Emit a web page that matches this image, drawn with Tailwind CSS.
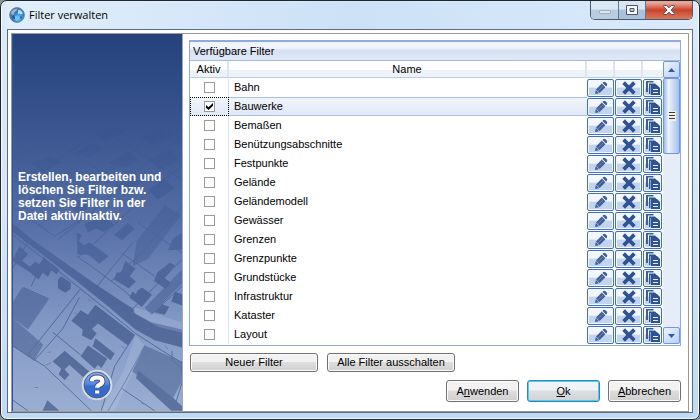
<!DOCTYPE html>
<html lang="de">
<head>
<meta charset="utf-8">
<meta name="viewport" content="width=device-width, initial-scale=1">
<title>Filter verwalten</title>
<script src="https://cdn.jsdelivr.net/npm/@tailwindcss/browser@4"></script>
</head>
<body class="bg-[#8a949c] font-['Liberation_Sans',Arial,sans-serif] text-[11px] leading-[13px] text-black">

<svg class="hidden" aria-hidden="true">
  <symbol id="pencil" viewBox="0 0 14 14">
    <path d="M1 13l.8-4L5 12.200z" fill="#3f5f96"/>
    <path d="M2 8.400L7.800 2.600l3.600 3.600L5.600 12z" fill="#3f5f96"/>
    <path d="M8.500 1.900l.8-.8q1.200-.8 2.200.1l1.300 1.300q.9 1.200 0 2.200l-.8.8z" fill="#3f5f96"/>
    <path d="M4.300 9.600l5.200-5.200" stroke="#7d9aca" stroke-width=".7"/>
  </symbol>
  <symbol id="cross" viewBox="0 0 14 14">
    <path d="M3 3l8 8M11 3l-8 8" stroke="#2f5291" stroke-width="3.800" stroke-linecap="square"/>
  </symbol>
  <symbol id="copy" viewBox="0 0 16 16">
    <path d="M1 1h7.500v1.500H3V12H1z" fill="#3c5f9c"/>
    <path d="M4 3.500h6L11.500 5H6v9H4z" fill="#2f5291"/>
    <path d="M6 5h6l3 3v7H6z" fill="#2f5291"/>
    <path d="M5.500 5v9.500" stroke="#b9cae8" stroke-width=".7"/>
    <path d="M8 9.500h5M8 12.500h5" stroke="#e4ecfa"/>
  </symbol>
</svg>

<main class="flex h-screen flex-col rounded-[7px] border border-[#20262c] bg-[#cfe1f5] bg-linear-to-b from-[#dcebfa] via-[#d3e6fa] to-[#bfdaf5] px-1.5 pb-1.5 shadow-[inset_0_0_0_1px_#f4faff]">
  <header class="flex h-7 shrink-0 items-start justify-between bg-linear-to-r from-[#e2effb]/80 via-[#c2dbf5]/60 to-[#d9eafb]/80">
    <div class="flex h-[27px] items-center gap-1 pl-0.5 font-['Open_Sans','Noto_Sans',sans-serif] text-[11px]">
      <svg class="size-4" viewBox="0 0 16 16" aria-hidden="true">
        <defs><radialGradient id="globe" cx=".6" cy=".7" r=".8"><stop offset="0" stop-color="#6bd0f5"/><stop offset=".5" stop-color="#3478c4"/><stop offset="1" stop-color="#6a7788"/></radialGradient></defs>
        <circle cx="8" cy="8" r="7.400" fill="url(#globe)" stroke="#58789c" stroke-width=".8"/>
        <path d="M2.500 4.500Q5 1.500 8.500 1.800L7 4 5 5.500 4.500 8 2 7z" fill="#b9c8d6" opacity=".8"/>
        <path d="M9 3l3 .5 2 3-2 1-1.500-1L9 7z" fill="#a8e4fb"/>
        <path d="M6 9l3 .5 1 2-2 3-2-2z" fill="#6cc3ee"/>
        <path d="M3 11l2-3 1 4M11 9l2 1-1 3z" fill="#224f96"/>
      </svg>
      <h1>Filter verwalten</h1>
    </div>
    <div class="flex h-[19px] overflow-hidden rounded-b-[5px] border border-t-0 border-[#4c5968]">
      <button aria-label="Minimieren" class="flex w-7 items-center justify-center border-r border-[#65778a] bg-linear-to-b from-[#dbe8f6] from-45% to-[#b9cde2] to-50%">
        <svg class="mt-1 h-1 w-3" viewBox="0 0 12 4"><rect x=".5" y=".5" width="11" height="3" rx=".5" fill="#dfe6ec" stroke="#a3afba"/></svg>
      </button>
      <button aria-label="Maximieren" class="flex w-[27px] items-center justify-center border-r border-[#65778a] bg-linear-to-b from-[#d8e5f3] from-45% to-[#a9c1da] to-50%">
        <svg class="h-2.5 w-3" viewBox="0 0 12 10"><path d="M.5.500h11v9H.5zM4 3.500v3h4v-3z" fill="#fff" fill-rule="evenodd" stroke="#4c5565"/></svg>
      </button>
      <button aria-label="Schließen" class="flex w-[46px] items-center justify-center bg-linear-to-b from-[#e6a598] from-10% via-[#c9402a] via-50% to-[#d97a5c]">
        <svg class="h-2.5 w-3" viewBox="0 0 12 10"><path d="M.7.500h3L6 2.800 8.300.500h3v1L8 5l3.300 3.500v1h-3L6 7.200 3.700 9.500h-3v-1L4 5 .7 1.500z" fill="#fff" stroke="#5a4550" stroke-width=".9"/></svg>
      </button>
    </div>
  </header>

  <div class="flex min-h-0 grow flex-col border border-[#5f6b78] bg-white pt-[3px] pr-[3px] pl-[3px]">
    <div class="flex min-h-0 grow border border-[#9a9a9a]">
      <aside class="relative flex w-[171px] shrink-0 flex-col border-r border-[#a9a5a0] bg-[#3a5590]">
        <svg class="absolute inset-0 size-full" viewBox="0 0 170 378" preserveAspectRatio="xMidYMid slice" aria-hidden="true">
          <defs>
            <linearGradient id="sky" x1="0" y1="0" x2="0" y2="1"><stop offset="0" stop-color="#25427c"/><stop offset=".25" stop-color="#3a5590"/><stop offset=".5" stop-color="#556ea5"/><stop offset=".75" stop-color="#8096c4"/><stop offset="1" stop-color="#9baed2"/></linearGradient>
            <linearGradient id="fade" x1="0" y1="0" x2="0" y2="1"><stop offset="0" stop-color="#fff" stop-opacity="0"/><stop offset=".2" stop-color="#fff" stop-opacity=".25"/><stop offset=".45" stop-color="#fff" stop-opacity=".7"/><stop offset=".6" stop-color="#fff"/></linearGradient>
            <linearGradient id="shade" gradientUnits="userSpaceOnUse" x1="0" y1="0" x2="0" y2="948"><stop offset="0" stop-color="#2c4985"/><stop offset=".3" stop-color="#3a5590"/><stop offset=".5" stop-color="#4a6298"/><stop offset="1" stop-color="#5d739f"/></linearGradient>
            <mask id="haze" maskUnits="userSpaceOnUse" x="0" y="0" width="540" height="948"><rect width="540" height="948" fill="url(#fade)"/></mask>
          </defs>
          <rect width="170" height="378" fill="url(#sky)"/>
          <g transform="translate(-4 66) scale(.33333)"><g mask="url(#haze)">
            <path fill="url(#shade)" d="M12 370L70 418 150 475 250 545 340 605 375 627 382 642 430 668 522 690V744L440 722 382 690 300 620 200 540 110 470 12 395z"/>
            <path fill="url(#shade)" d="M42 564L122 600 60 690 12 655V612zM12 655L60 695 106 735 78 784 12 738zM410 738L520 785V850L490 905 372 815zM374 500L386 425 470 318 520 345 420 478zM522 510L410 625 430 645 522 552z" opacity=".7"/>
            <g fill="url(#shade)">
              <path d="M218 632L240 646 262 616 380 706 360 738 270 672 252 688 266 702 250 722 222 708 224 690 190 664z"/>
              <path d="M262 716L320 762 308 782 254 740zM240 738L298 778 280 806 270 796 260 808 218 770z"/>
              <path d="M170 754L248 820 236 842 184 796 170 810 184 826 170 842 152 824 160 808 134 786zM118 902L154 934H104zM390 812L495 895 522 920V934H490L384 836z"/>
              <path d="M35 440L60 464 42 484 66 502 82 486 104 500 84 530 12 484zM108 474L154 510 146 524 130 512 120 532 104 520 92 540 72 524z"/>
              <path d="M150 540L160 530 188 550V568L172 580 150 566zM206 398L222 408 212 424 228 438 244 428 302 470 274 492 240 466 208 464z"/>
              <path d="M352 484L382 508 366 530 384 546 362 566 318 540 326 520 340 518zM388 574L402 564 432 586 402 622 364 594 374 576 384 584zM448 518L486 490 502 498 470 536 490 550 472 568 438 544zM500 576L522 584V618L490 606z"/>
              <path d="M230 372L292 350 318 376 288 398 264 386 240 400zM330 396L360 370 380 388 342 422 318 406zM462 614L484 622 470 646 440 638zM494 418L522 400V450L480 452z"/>
              <path d="M60 298L100 282 130 302 104 318zM200 160L250 130 282 148 246 174zM300 190L360 160 390 180 350 204zM420 180L490 150 512 182 460 210zM70 190L130 170 160 188 104 218zM318 260L370 230 400 248 350 286zM420 270L470 240 500 266 450 300zM180 320L226 296 250 318 214 344zM260 100L320 84 350 100 290 124zM400 110L460 90 500 106 430 136z"/>
            </g>
            <g fill="none" stroke="url(#shade)" stroke-width="3">
              <path d="M12 405L100 472 190 546 290 626 380 700 460 752 522 790M216 570L58 768M134 698L218 766M12 738L110 800 250 934M78 784L164 688 214 594M380 706L320 800 280 934M410 738L350 850 300 934M340 866L440 934M492 755V780L522 810M520 785L522 850 500 920M12 900L60 934M46 564L122 598"/>
              <path d="M375 627L522 480M430 645L522 560M310 545L410 450 522 322M260 570L316 500 374 430M150 420L250 340 380 220 522 110M210 474L300 394 440 262 522 200M12 510L58 430M70 560L110 470M205 470L250 500 350 575 400 620M340 460L440 530M390 370L522 460M12 320L140 410 220 360M12 250L130 190 260 110M90 380L210 290 340 180 470 80M12 180L110 130M60 220L180 310M180 150L360 270M300 100L522 240"/>
            </g>
            <g fill="#cad6ee" opacity=".2"><path d="M382 625L522 668V700L450 682 375 640zM382 706L410 738 320 934H280L348 812z"/></g>
            <path fill="none" stroke="#6c83ad" stroke-width="3" d="M150 614q5 2 2 7M240 600q10 0 8 8M118 758q12 2 12-3M36 670q8 0 8 8M200 640q8 2 8 8M340 740l12 8M130 790l-16 6M420 775q12-6 16 2M470 740l10 8M80 864h10M60 724q12 0 9 8M400 910l8 4"/>
          </g></g>
          <rect width="1" height="378" fill="#2456ab"/>
        </svg>
        <p class="relative my-auto pr-0 pb-[52px] pl-1.5 text-[12px] leading-[13px] font-bold text-white">Erstellen, bearbeiten und<br>löschen Sie Filter bzw.<br>setzen Sie Filter in der<br>Datei aktiv/inaktiv.</p>
        <button aria-label="Hilfe" class="absolute bottom-2.5 left-1/2 size-8 -translate-x-1/2">
          <svg viewBox="0 0 32 32" aria-hidden="true">
            <defs><linearGradient id="ball" x1="0" y1="0" x2="0" y2="1"><stop offset="0" stop-color="#88aff0"/><stop offset=".45" stop-color="#5a8ade"/><stop offset=".55" stop-color="#376bcc"/><stop offset="1" stop-color="#326ad2"/></linearGradient></defs>
            <circle cx="16" cy="16" r="14.200" fill="url(#ball)" stroke="#d5d9df" stroke-width="2.200"/>
            <circle cx="16" cy="16" r="12.900" fill="none" stroke="#3e547e" stroke-width=".8"/>
            <g fill="none" stroke-linejoin="round"><path d="M10.800 12.200Q11 8.500 16.200 8.500 21.400 8.500 21.400 12.200 21.400 14.500 18.500 15.700 16.200 16.700 16.200 18.800M16.200 21.600v3" stroke="#4a4e58" stroke-width="6"/><path d="M10.800 12.200Q11 8.500 16.200 8.500 21.400 8.500 21.400 12.200 21.400 14.500 18.500 15.700 16.200 16.700 16.200 18.800M16.200 21.600v3" stroke="#fff" stroke-width="4.200"/></g>
          </svg>
        </button>
      </aside>

      <section class="flex min-w-0 grow flex-col bg-white pt-1.5 pr-[7px] pb-[9px] pl-1.5">
        <div class="flex flex-col border border-t-2 border-[#8faadc] pb-px">
          <h2 class="h-[19px] border-b border-[#a5bbe0] bg-linear-to-b from-[#f1f5fb] from-35% via-[#d6e1f3] via-45% to-[#dfe8f6] pt-[3px] pl-[3px]">Verfügbare Filter</h2>
          <div class="flex">
            <table class="grow table-fixed border-separate border-spacing-0">
              <colgroup><col class="w-[39px]"><col><col class="w-7"><col class="w-7"><col class="w-5"></colgroup>
              <thead>
                <tr class="h-[17px] bg-linear-to-b from-white from-50% to-[#eef2f9] to-55%">
                  <th class="border-r-2 border-b border-[#dde5f3] border-b-[#b9caea] p-0 font-normal">Aktiv</th>
                  <th class="border-r-2 border-b border-[#dde5f3] border-b-[#b9caea] p-0 font-normal">Name</th>
                  <th class="border-r-2 border-b border-[#dde5f3] border-b-[#b9caea] p-0" aria-label="Bearbeiten"></th>
                  <th class="border-r-2 border-b border-[#dde5f3] border-b-[#b9caea] p-0" aria-label="Löschen"></th>
                  <th class="border-b border-[#b9caea] p-0" aria-label="Kopieren"></th>
                </tr>
              </thead>
              <tbody id="filters"></tbody>
            </table>
            <div class="flex w-[17px] flex-col bg-[#e6ecf8]">
              <button aria-label="Nach oben" class="flex h-[17px] shrink-0 items-center justify-center rounded-[2px] border border-[#6f97dc] bg-linear-to-br from-[#eef4fd] to-[#b9cff2]"><svg class="h-1 w-[7px]" viewBox="0 0 7 4"><path d="M0 4L3.500 0 7 4z" fill="#2c5cab"/></svg></button>
              <div class="flex h-[76px] items-center justify-center rounded-[2px] border border-[#6f97dc] bg-linear-to-r from-[#9dbbee] via-[#eef4fd] via-30% to-[#a3c0ef]"><svg class="h-2.5 w-2" viewBox="0 0 8 10"><path fill="#f4f1ea" d="M0 0h8v10H0z"/><path d="M1 1.500h6M1 4.500h6M1 7.500h6" stroke="#3d3d3d"/></svg></div>
              <div class="grow"></div>
              <button aria-label="Nach unten" class="flex h-[17px] shrink-0 items-center justify-center rounded-[2px] border border-[#6f97dc] bg-linear-to-br from-[#eef4fd] to-[#b9cff2]"><svg class="h-1 w-[7px]" viewBox="0 0 7 4"><path d="M0 0h7L3.500 4z" fill="#2c5cab"/></svg></button>
            </div>
          </div>
        </div>

        <div class="mt-[7px] flex gap-[9px] pl-px">
          <button class="h-[19px] w-32 rounded-[3px] border border-[#707070] bg-linear-to-b from-[#f2f2f2] from-45% via-[#dedede] via-50% to-[#cfcfcf] shadow-[inset_0_0_0_1px_#fcfcfc]">Neuer Filter</button>
          <button class="h-[19px] w-32 rounded-[3px] border border-[#707070] bg-linear-to-b from-[#f2f2f2] from-45% via-[#dedede] via-50% to-[#cfcfcf] shadow-[inset_0_0_0_1px_#fcfcfc]">Alle Filter ausschalten</button>
        </div>
        <div class="mt-auto flex justify-end gap-2">
          <button class="h-[22px] w-[73px] rounded-[3px] border border-[#707070] bg-linear-to-b from-[#f2f2f2] from-45% via-[#dedede] via-50% to-[#cfcfcf] shadow-[inset_0_0_0_1px_#fcfcfc]">A<u>n</u>wenden</button>
          <button class="h-[22px] w-[73px] rounded-[3px] border border-[#3c7fb1] bg-linear-to-b from-[#f0f3f5] from-45% via-[#dce0e3] via-50% to-[#cfd3d6] shadow-[inset_0_0_0_1px_#48d0f5]"><u>O</u>k</button>
          <button class="h-[22px] w-[73px] rounded-[3px] border border-[#707070] bg-linear-to-b from-[#f2f2f2] from-45% via-[#dedede] via-50% to-[#cfcfcf] shadow-[inset_0_0_0_1px_#fcfcfc]"><u>A</u>bbrechen</button>
        </div>
      </section>
    </div>
  </div>
</main>

<script>
const names = ["Bahn", "Bauwerke", "Bemaßen", "Benützungsabschnitte", "Festpunkte", "Gelände", "Geländemodell", "Gewässer", "Grenzen", "Grenzpunkte", "Grundstücke", "Infrastruktur", "Kataster", "Layout"];
const selected = "Bauwerke";
const action = (icon, label, size) => `<button aria-label="${label}" class="flex h-[18px] w-full items-center justify-center rounded-[2px] border border-[#3e6fc0] bg-linear-to-b from-[#f3f7fd] from-45% to-[#c3d4f0] to-50% shadow-[inset_0_0_0_1px_#f5f9ff]"><svg class="${size}" aria-hidden="true"><use href="#${icon}"/></svg></button>`;
document.getElementById("filters").innerHTML = names.map((name, i) => {
  const on = name === selected;
  const row = on ? "h-[19px] bg-linear-to-b from-[#f3f6fb] to-[#dfe7f5]" : "h-[19px]";
  const first = on ? "outline-1 -outline-offset-1 outline-dotted outline-black" : "border-r border-[#dde5f3]";
  const text = on ? "border-y border-[#a9c0e8]" : "";
  return `<tr class="${row}">
    <td class="p-0 ${first}"><div class="flex justify-center"><input id="f${i}" type="checkbox" ${on ? "checked" : ""} class="peer size-[11px] appearance-none border border-[#9a9a9a] bg-white"><svg class="pointer-events-none absolute mt-0.5 hidden size-[7px] peer-checked:block" viewBox="0 0 7 7"><path d="M0 2l2.500 2.300L7 0v2.800L2.500 7 0 4.800z"/></svg></div></td>
    <td class="p-0 pl-[5px] ${text}"><label for="f${i}">${name}</label></td>
    <td class="p-0 pr-px">${action("pencil", name + " bearbeiten", "size-3.5")}</td>
    <td class="p-0 pr-px">${action("cross", name + " löschen", "size-3.5")}</td>
    <td class="p-0 pr-px">${action("copy", name + " kopieren", "size-4 shrink-0")}</td>
  </tr>`;
}).join("");
</script>
</body>
</html>
